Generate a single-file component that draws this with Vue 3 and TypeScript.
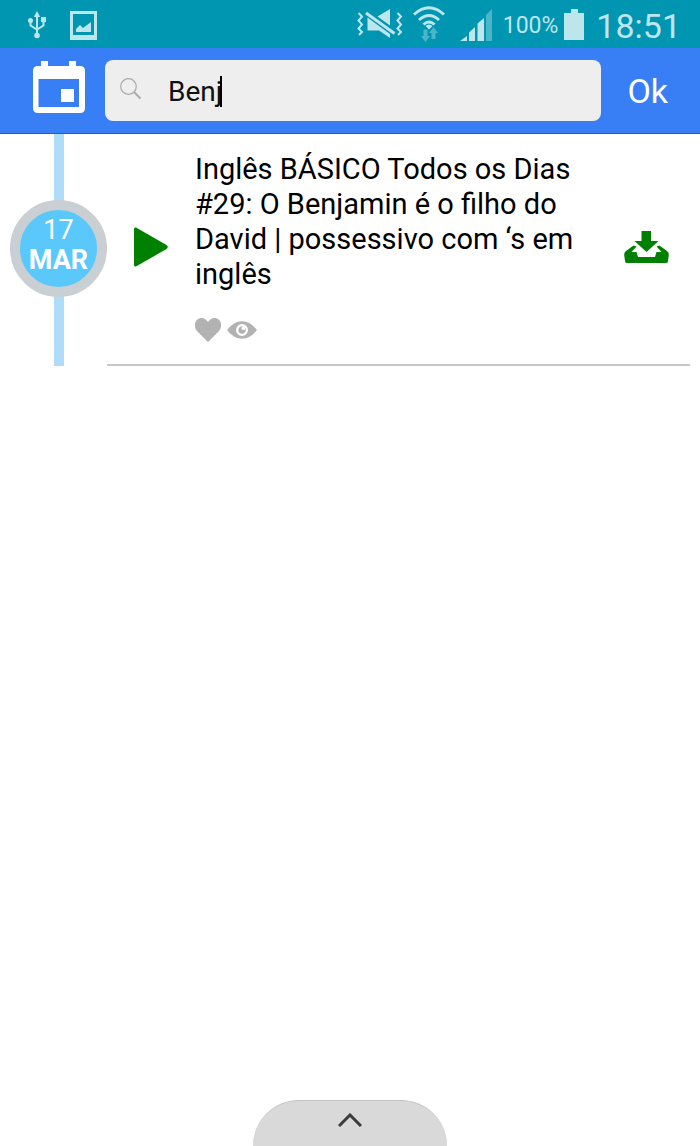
<script setup lang="ts">
import { ref } from 'vue'

interface Lesson {
  day: string
  month: string
  title: string
}

const query = ref('Benj')
const lessons = ref<Lesson[]>([
  {
    day: '17',
    month: 'MAR',
    title: 'Inglês BÁSICO Todos os Dias #29: O Benjamin é o filho do David | possessivo com ‘s em inglês',
  },
])
</script>

<template>
  <div class="screen">
    <div class="status">
      <div class="group notices">
        <svg class="usb" width="20" height="28" viewBox="0 0 20 28" fill="none" stroke="currentColor" stroke-width="2">
          <path d="M10 5V24M3.5 9V14.5L10 18.5L16.5 14.5V8" />
          <path d="M10 0L13.2 6H6.8Z" fill="currentColor" stroke="none" />
          <circle cx="10" cy="24.5" r="2.8" fill="currentColor" stroke="none" />
          <circle cx="3.5" cy="9.5" r="2.5" fill="currentColor" stroke="none" />
          <path d="M14 6h5v5h-5z" fill="currentColor" stroke="none" />
        </svg>
        <svg width="27" height="29" viewBox="0 0 27 29" fill="currentColor">
          <path fill-rule="evenodd" d="M0 0H27V29H0ZM3 3V24H24V3Z" />
          <path d="M6 21V18L10 14L13 17L21 11V21Z" />
        </svg>
      </div>
      <div class="group signals">
        <svg class="mute" width="46" height="30" viewBox="0 0 46 30" fill="none" stroke="currentColor" stroke-width="2">
          <path d="M1.5 4L5 7.500L1.500 11.500L5 15.500L1.500 19.500L5 23L2 26M40.500 4L44 7.500L40.500 11.500L44 15.500L40.500 19.500L44 23L41 26" />
          <path d="M10.500 8.500L33 25V29L22 21.500H10.500ZM20.500 7.500L33 0V16.500Z" fill="currentColor" stroke="none" />
          <path d="M9 4L37.500 24.500" stroke-width="3" />
        </svg>
        <svg class="wifi" width="34" height="36" viewBox="0 0 34 36" fill="none" stroke="currentColor" stroke-width="3">
          <path d="M2 8.500Q17-5 32 8.500M7 14Q17 5 27 14M11.500 18.500Q17 13.500 22.500 18.500" />
          <path d="M13.500 20Q17 17 20.500 20L17 23.500Z" fill="currentColor" stroke="none" />
          <g class="faint" fill="currentColor" stroke="none">
            <path d="M11.500 23.500H15.500V30H18L13.500 36L9 30H11.500Z" />
            <path d="M19.500 33V27H17L21.500 21L26 27H23.500V33Z" />
          </g>
        </svg>
        <svg class="bars" width="32" height="32" viewBox="0 0 32 32" fill="currentColor">
          <path d="M0 32L7 27V32ZM9 32V23.500L15 18V32ZM17.500 32V14.500L24 9V32Z" />
          <path class="faint" d="M26 32V6L32 0V32Z" />
        </svg>
        <span class="percent">100%</span>
        <svg class="battery" width="20" height="31" viewBox="0 0 20 31" fill="currentColor">
          <path d="M7 0H14V4H20V31H0V4H7Z" />
        </svg>
        <time class="clock">18:51</time>
      </div>
    </div>

    <header class="toolbar">
      <button class="calendar" type="button" aria-label="Calendário">
        <svg width="52" height="52" viewBox="0 0 52 52" fill="#fff">
          <path fill-rule="evenodd" d="M8 0H15V5H36V0H43V5H47Q52 5 52 10V47Q52 52 47 52H5Q0 52 0 47V10Q0 5 5 5H8ZM5.500 18V46H46V18Z" />
          <path d="M28 28H41V41H28Z" />
        </svg>
      </button>
      <label class="field">
        <svg width="22" height="22" viewBox="0 0 22 22" fill="none" stroke="#aaa">
          <circle cx="8.500" cy="8.500" r="7.800" stroke-width="1.200" />
          <path d="M14 14L20.500 20.500" stroke-width="2" />
        </svg>
        <input v-model="query" type="text" aria-label="Buscar" />
        <span class="caret"></span>
      </label>
      <button class="ok" type="button">Ok</button>
    </header>

    <main>
      <article v-for="lesson in lessons" :key="lesson.title" class="row">
        <div class="timeline">
          <div class="date">
            <span>{{ lesson.day }}</span>
            <strong>{{ lesson.month }}</strong>
          </div>
        </div>
        <div class="lesson">
          <button class="play" type="button" aria-label="Reproduzir">
            <svg width="34" height="40" viewBox="0 0 34 40" fill="#008000">
              <path d="M0 2Q0 0 2 .5L32.500 18Q35 20 32.500 22L2 39.500Q0 40 0 38Z" />
            </svg>
          </button>
          <div class="text">
            <h2>{{ lesson.title }}</h2>
            <div class="marks">
              <svg width="26" height="24" viewBox="0 0 26 24" fill="#b2b2b2">
                <path d="M13 24L2.500 13.500C-1 10-.8 4.500 2 2C5-1 10-.5 13 4C16-.5 21-1 24 2C26.800 4.500 27 10 23.500 13.500Z" />
              </svg>
              <svg width="30" height="18" viewBox="0 0 31 18">
                <path fill="#b2b2b2" d="M0 9Q7 0 15.500 0T31 9Q24 18 15.500 18T0 9Z" />
                <circle cx="15.500" cy="9" r="5" fill="none" stroke="#fff" stroke-width="2.400" />
                <circle cx="17" cy="7" r="2" fill="#fff" />
              </svg>
            </div>
          </div>
          <button class="download" type="button" aria-label="Baixar">
            <svg width="45" height="32" viewBox="0 0 45 32" fill="#008000">
              <path d="M17.500 0H27V10H34.500L22.500 21L10.500 10H17.500Z" />
              <path d="M9.500 14.500L12.500 15.500L7.500 21H12.500L14 26H31L32.500 21H37.500L32.500 15.500L35.500 14.500L43 20Q45 21.500 44.800 24L44 30Q44 32 42 32H3Q1 32 1 30L.2 24Q0 21.500 2 20Z" />
            </svg>
          </button>
        </div>
      </article>
    </main>

    <button class="drawer" type="button" aria-label="Abrir painel">
      <svg width="24" height="14" viewBox="0 0 24 14" fill="none" stroke="#3c3c3c" stroke-width="3">
        <path d="M1 13L12 2L23 13" />
      </svg>
    </button>
  </div>
</template>

<style>
body {
  margin: 0;
  background: #fff;
}
</style>

<style scoped>
.screen {
  display: flex;
  flex-direction: column;
  min-height: 100vh;
  font-family: Roboto, "Liberation Sans", sans-serif;
  color: #000;
}

svg {
  display: block;
  flex: none;
}

button {
  display: flex;
  align-items: center;
  justify-content: center;
  padding: 0;
  border: 0;
  background: none;
  font: inherit;
  flex: none;
}

.status {
  display: flex;
  align-items: center;
  justify-content: space-between;
  height: 48px;
  padding: 2px 19px 0 27px;
  box-sizing: border-box;
  background: #0096b2;
  color: #bde5ec;
}

.group {
  display: flex;
  align-items: center;
}

.notices {
  gap: 23px;
}

.faint {
  opacity: 0.4;
}

.mute,
.wifi,
.battery {
  margin-bottom: 2px;
}

.wifi {
  margin-right: 14px;
  margin-left: 9px;
}

.percent {
  margin: 0 6px 0 11px;
  font-size: 23px;
  line-height: 40px;
  padding-top: 2px;
}

.clock {
  margin-left: 12px;
  font-size: 34px;
  line-height: 40px;
  padding-top: 2px;
}

.toolbar {
  display: flex;
  align-items: center;
  height: 85px;
  padding: 0 32px 0 33px;
  border-bottom: 1px solid #0c60ee;
  background: #387ef5;
}

.calendar {
  margin: 0 20px 8px 0;
}

.field {
  position: relative;
  display: flex;
  flex: 1;
  align-items: center;
  gap: 26px;
  min-width: 0;
  height: 61px;
  padding: 0 15px;
  border-radius: 8px;
  box-sizing: border-box;
  background: #eee;
}

.field svg {
  margin-bottom: 3px;
}

.field input {
  flex: 1;
  min-width: 0;
  padding: 2px 0 0;
  border: 0;
  outline: 0;
  background: none;
  font: inherit;
  font-size: 28px;
  color: #111;
}

.caret {
  position: absolute;
  top: 16px;
  left: 115px;
  width: 2px;
  height: 31px;
  background: #000;
}

.ok {
  margin-left: 26px;
  font-size: 34px;
  color: #fff;
}

.row {
  display: flex;
  margin-right: 10px;
}

.timeline {
  display: flex;
  align-items: center;
  flex: none;
  margin-left: 10px;
  background: linear-gradient(#afdcf9, #afdcf9) 44px 0 / 10px 100% no-repeat;
}

.date {
  display: flex;
  flex-direction: column;
  align-items: center;
  justify-content: center;
  width: 97px;
  height: 97px;
  box-sizing: border-box;
  margin-bottom: 3px;
  padding-bottom: 7px;
  border: 10px solid #c9cfd2;
  border-radius: 50%;
  background: #5ac8fb;
  font-size: 27px;
  line-height: 30px;
  color: #fff;
}

.lesson {
  display: flex;
  align-items: center;
  flex: 1;
  min-width: 0;
  padding: 18px 21px 22px 27px;
  border-bottom: 2px solid #c8c8c8;
}

.text {
  flex: 1;
  min-width: 0;
  margin: 0 40px 0 27px;
}

h2 {
  margin: 0 0 26px;
  font-size: 29px;
  font-weight: 400;
  line-height: 35px;
}

.marks {
  display: flex;
  align-items: center;
  gap: 6px;
}

.drawer {
  align-items: flex-start;
  align-self: center;
  width: 194px;
  height: 46px;
  margin-top: auto;
  padding-top: 12px;
  border-top: 1px solid #c4c4c4;
  border-radius: 52px 52px 0 0;
  box-sizing: border-box;
  background: #d9d9d9;
}
</style>
